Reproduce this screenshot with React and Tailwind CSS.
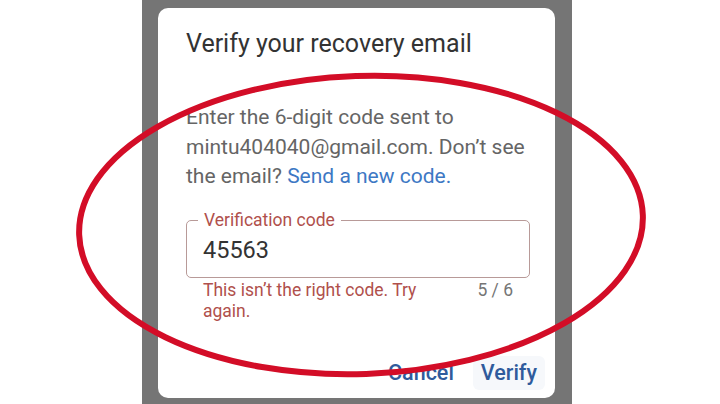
export default function App() {
  return (
    <div className="relative w-[720px] h-[404px] overflow-hidden bg-white font-['Roboto','Liberation_Sans',sans-serif]">
      <div className="ml-[142px] w-[430px] h-full bg-[#757575] pt-[8px] pl-[16px]">
        {/* Dialog */}
        <div className="w-[397px] h-[390px] bg-white rounded-[10px] pl-[28px] pr-[10px] pt-[21px] flex flex-col">
          <h2 className="text-[25px] leading-[30px] text-[#333]">Verify your recovery email</h2>

          <p className="mt-[44px] w-[344px] text-[21px] leading-[29.5px] text-[#656565]">
            Enter the 6-digit code sent to mintu404040@gmail.com. Don’t see the email?{" "}
            <span className="text-[#3d78c4]">Send a new code.</span>
          </p>

          <div className="relative mt-[28px] w-[344px] h-[58px] rounded-[5px] border border-[#b89a98]">
            <span className="absolute -top-[11px] left-[11px] px-[6px] bg-white text-[17.5px] leading-[20px] text-[#b0504c]">
              Verification code
            </span>
            <div className="pt-[15px] pl-[16px] text-[23.5px] leading-[28px] text-[#333]">45563</div>
          </div>

          <div className="flex mt-[2px] pl-[17px] w-[344px]">
            <p className="w-[250px] text-[17.5px] leading-[21px] text-[#b0504c]">This isn’t the right code. Try again.</p>
            <span className="ml-auto mr-[17px] text-[17.5px] leading-[21px] text-[#757575]">5 / 6</span>
          </div>

          <div className="mt-auto mb-[8px] flex justify-end items-center gap-[11px]">
            <button className="px-[8px] py-[4px] text-[21.5px] leading-[26px] text-[#2f5b9c] font-medium">Cancel</button>
            <button className="px-[8px] py-[4px] rounded-[6px] bg-[#f6f8fb] text-[21.5px] leading-[26px] text-[#2f5b9c] font-medium">Verify</button>
          </div>
        </div>
      </div>

      {/* Red annotation ellipse */}
      <svg className="absolute inset-0 pointer-events-none" width="720" height="404" viewBox="0 0 720 404">
        <ellipse cx="361" cy="225" rx="282" ry="149" fill="none" stroke="#d30d27" strokeWidth="6" transform="rotate(-2 361 225)" />
      </svg>
    </div>
  );
}
